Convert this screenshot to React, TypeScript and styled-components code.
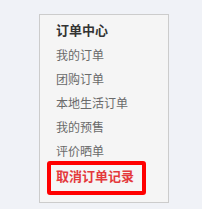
import React from "react";
import styled, { createGlobalStyle } from "styled-components";

const Global = createGlobalStyle`
  html, body {
    margin: 0;
    padding: 0;
    background: #f0f2f7;
  }
  body {
    font-family: "Noto Sans CJK SC", "Microsoft YaHei", sans-serif;
  }
`;

const Page = styled.div`
  padding: 14px 0 0 39px;
`;

const Panel = styled.div`
  box-sizing: border-box;
  width: 130px;
  height: 189px;
  background: #f5f5f5;
  border: 1px solid #cccccc;
  padding: 3px 0 0 0;
`;

const Title = styled.h3`
  margin: 0 0 1px 0;
  padding-left: 16px;
  font-size: 13px;
  line-height: 24px;
  font-weight: bold;
  color: #333333;
`;

const List = styled.ul`
  list-style: none;
  margin: 0;
  padding: 0;
`;

const Item = styled.li<{ $highlight?: boolean }>`
  font-size: ${(p) => (p.$highlight ? "13px" : "12px")};
  font-weight: ${(p) => (p.$highlight ? "bold" : "normal")};
  color: ${(p) => (p.$highlight ? "#e4393c" : "#6a6a6a")};
  line-height: ${(p) => (p.$highlight ? "22px" : "24px")};
  padding-left: ${(p) => (p.$highlight ? "5px" : "16px")};
  ${(p) =>
    p.$highlight &&
    `
    box-sizing: border-box;
    width: 99px;
    margin: -2px 0 0 7px;
    padding-bottom: 4px;
    border: 4px solid #ff0000;
    border-radius: 3px;
  `}
`;

const items = ["我的订单", "团购订单", "本地生活订单", "我的预售", "评价晒单"];

export default function App() {
  return (
    <>
      <Global />
      <Page>
        <Panel>
          <Title>订单中心</Title>
          <List>
            {items.map((t) => (
              <Item key={t}>{t}</Item>
            ))}
            <Item $highlight>取消订单记录</Item>
          </List>
        </Panel>
      </Page>
    </>
  );
}
